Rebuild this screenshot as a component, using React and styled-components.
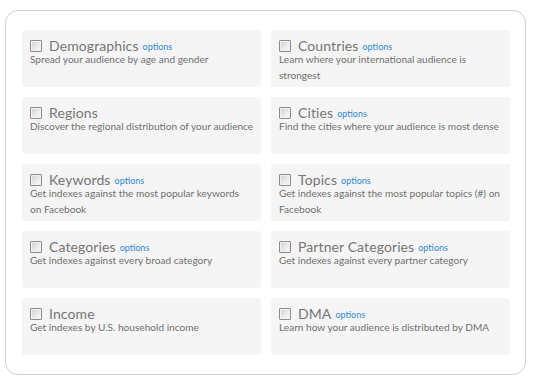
import React from "react";
import styled, { createGlobalStyle } from "styled-components";

const Global = createGlobalStyle`
  html, body { margin: 0; padding: 0; background: #fff; }
  body { font-family: "Lato", "Liberation Sans", sans-serif; }
`;

const Panel = styled.div`
  box-sizing: border-box;
  margin: 10px 0 0 5px;
  width: 521px;
  height: 365px;
  border: 1px solid #cfcfcf;
  border-radius: 13px;
  padding: 19px 15px 0 16px;
  display: grid;
  grid-template-columns: 239px 239px;
  grid-auto-rows: 57px;
  column-gap: 10px;
  row-gap: 10px;
`;

const Card = styled.div`
  background: #f5f5f5;
  border-radius: 3px;
  padding: 6px 5px 0 8px;
  box-sizing: border-box;
`;

const Head = styled.div`
  display: flex;
  align-items: center;
  height: 18px;
`;

const Box = styled.input.attrs({ type: "checkbox" })`
  appearance: none;
  margin: 2px 7px 0 0;
  width: 12px;
  height: 12px;
  box-sizing: border-box;
  border: 1px solid #8c8c8c;
  border-radius: 1px;
  background: linear-gradient(135deg, #cfcfcf 0%, #ececec 60%, #fafafa 100%);
  box-shadow: inset 0 0 0 1px #f2f2f2;
  flex: none;
`;

const Title = styled.span`
  font-size: 14px;
  color: #757575;
  letter-spacing: 0.1px;
`;

const Options = styled.a`
  font-size: 9px;
  color: #2d8ad3;
  margin-left: 4px;
  margin-top: 3px;
  text-decoration: none;
`;

const Desc = styled.p`
  margin: -3px 0 0 0;
  font-size: 10.1px;
  line-height: 16px;
  color: #707070;
`;

const items = [
  ["Demographics", true, "Spread your audience by age and gender"],
  ["Countries", true, "Learn where your international audience is strongest"],
  ["Regions", false, "Discover the regional distribution of your audience"],
  ["Cities", true, "Find the cities where your audience is most dense"],
  ["Keywords", true, "Get indexes against the most popular keywords on\u00A0Facebook"],
  ["Topics", true, "Get indexes against the most popular topics (#) on Facebook"],
  ["Categories", true, "Get indexes against every broad category"],
  ["Partner Categories", true, "Get indexes against every partner category"],
  ["Income", false, "Get indexes by U.S. household income"],
  ["DMA", true, "Learn how your audience is distributed by DMA"],
];

export default function App() {
  return (
    <>
      <Global />
      <Panel>
        {items.map(([t, o, d]) => (
          <Card key={t}>
            <Head>
              <Box />
              <Title>{t}</Title>
              {o && <Options href="#">options</Options>}
            </Head>
            <Desc>{d}</Desc>
          </Card>
        ))}
      </Panel>
    </>
  );
}
